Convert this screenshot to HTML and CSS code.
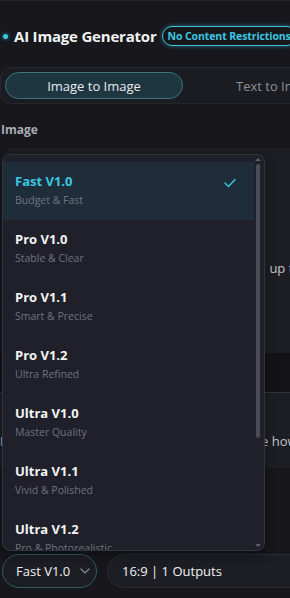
FILE: index.html
```html
<!DOCTYPE html>
<html lang="en">
<head>
    <meta charset="UTF-8">
    <meta name="viewport" content="width=device-width, initial-scale=1.0">
    <title>AI Image Generator</title>
    <link rel="stylesheet" href="styles.css">
</head>
<body>
    <div class="page">
        <header class="title-row">
            <span class="dot"></span>
            <h1>AI Image Generator</h1>
            <span class="badge">No Content Restrictions</span>
        </header>

        <nav class="tabs">
            <button class="tab active">Image to Image</button>
            <button class="tab">Text to Image</button>
        </nav>

        <div class="label">Image</div>

        <section class="upload-card">
            <p class="hint"><span class="hint-lead">Supports JPG, PNG, WEBP</span> up to 10MB</p>
        </section>
        <div class="divider-band"></div>
        <section class="prompt-card">
            <p class="hint"><span class="hint-lead">Describe the scen</span>e how you want it</p>
        </section>

        <footer class="bottom-bar">
            <button class="pill model-pill">Fast V1.0
                <svg width="10" height="6" viewBox="0 0 10 6"><path d="M1 1l4 4 4-4" fill="none" stroke="#8a8d96" stroke-width="1.2" stroke-linecap="round"/></svg>
            </button>
            <button class="pill ratio-pill">16:9 | 1 Outputs</button>
        </footer>

        <!-- open model menu -->
        <div class="menu">
            <ul class="menu-list">
                <li class="menu-item selected">
                    <div class="item-title">Fast V1.0</div>
                    <div class="item-desc">Budget &amp; Fast</div>
                    <svg class="check" width="12" height="10" viewBox="0 0 12 10"><path d="M1 5l3.5 3.5L11 1.5" fill="none" stroke="#3cc7e0" stroke-width="1.4" stroke-linecap="round" stroke-linejoin="round"/></svg>
                </li>
                <li class="menu-item">
                    <div class="item-title">Pro V1.0</div>
                    <div class="item-desc">Stable &amp; Clear</div>
                </li>
                <li class="menu-item">
                    <div class="item-title">Pro V1.1</div>
                    <div class="item-desc">Smart &amp; Precise</div>
                </li>
                <li class="menu-item">
                    <div class="item-title">Pro V1.2</div>
                    <div class="item-desc">Ultra Refined</div>
                </li>
                <li class="menu-item">
                    <div class="item-title">Ultra V1.0</div>
                    <div class="item-desc">Master Quality</div>
                </li>
                <li class="menu-item">
                    <div class="item-title">Ultra V1.1</div>
                    <div class="item-desc">Vivid &amp; Polished</div>
                </li>
                <li class="menu-item">
                    <div class="item-title">Ultra V1.2</div>
                    <div class="item-desc">Pro &amp; Photorealistic</div>
                </li>
            </ul>
            <div class="scrollbar">
                <span class="arrow up"></span>
                <span class="thumb"></span>
                <span class="arrow down"></span>
            </div>
        </div>
    </div>
</body>
</html>
```

FILE: styles.css
```css
:root {
    --bg: #17171c;
    --card: #1d1e24;
    --menu: #1f2029;
    --menu-border: #32333d;
    --selected: #1f2d3a;
    --accent: #3cc7e0;
    --text: #f1f2f4;
    --muted: #707380;
}

* {
    margin: 0;
    padding: 0;
    box-sizing: border-box;
}

body {
    font-family: 'Open Sans', 'Noto Sans', Arial, sans-serif;
    background-color: var(--bg);
    color: var(--text);
    width: 290px;
    height: 598px;
    overflow: hidden;
}

.page {
    position: relative;
    height: 598px;
    border-top: 1px solid #24252b;
}

.title-row {
    display: flex;
    align-items: center;
    gap: 5px;
    padding: 22px 0 0 3px;
    height: 48px;
    white-space: nowrap;
}

.dot {
    flex-shrink: 0;
    width: 5px;
    height: 5px;
    border-radius: 50%;
    background: var(--accent);
    box-shadow: 0 0 4px rgba(60, 199, 224, 0.7);
    margin-right: 1px;
}

.title-row h1 {
    flex-shrink: 0;
    font-size: 15px;
    font-weight: 700;
    letter-spacing: -0.2px;
}

.badge {
    flex-shrink: 0;
    padding: 2px 5px;
    border: 1px solid var(--accent);
    border-radius: 10px;
    color: var(--accent);
    font-size: 10.5px;
    font-weight: 700;
    letter-spacing: -0.1px;
    box-shadow: 0 0 5px rgba(60, 199, 224, 0.45);
}

.tabs {
    display: flex;
    margin-top: 18px;
    height: 37px;
    padding: 4px;
    background: #1b1c21;
    border: 1px solid #26272d;
    border-radius: 12px 0 0 12px;
    border-right: none;
    gap: 53px;
}

.tab {
    flex-shrink: 0;
    font-family: inherit;
    font-size: 13px;
    border: none;
    background: none;
    color: #8d9099;
    white-space: nowrap;
    border-radius: 14px;
}

.tab.active {
    width: 178px;
    color: #e8eaed;
    background: #1e3640;
    border: 1px solid #3d7480;
}

.label {
    margin-top: 17px;
    padding-left: 1px;
    font-size: 12px;
    font-weight: 700;
    color: #a9acb3;
}

.upload-card {
    margin: 10px 0 0 2px;
    height: 205px;
    background: var(--card);
    border-radius: 10px 0 0 0;
    padding-top: 111px;
}

.hint {
    white-space: nowrap;
    font-size: 13px;
    color: #c3c5cb;
}

.hint-lead {
    display: inline-block;
    width: 264px;
    overflow: hidden;
    vertical-align: bottom;
}

.divider-band {
    height: 40px;
    background: #131317;
    border-bottom: 1px solid #34353c;
}

.prompt-card {
    height: 75px;
    background: var(--card);
    padding-top: 39px;
}

.prompt-card .hint-lead {
    width: 261px;
}

.bottom-bar {
    display: flex;
    gap: 10px;
    padding: 0 0 0 2px;
    margin-top: 86px;
}

.pill {
    display: flex;
    align-items: center;
    height: 34px;
    font-family: inherit;
    font-size: 13px;
    color: var(--text);
    background: #1c1e24;
    border: 1px solid #2a2b31;
    border-radius: 17px;
    white-space: nowrap;
}

.model-pill {
    width: 95px;
    gap: 10px;
    padding-left: 13px;
    border-color: #2f5d66;
}

.ratio-pill {
    flex: 1;
    padding-left: 14px;
    border-radius: 17px 0 0 17px;
    border-right: none;
}

/* dropdown opened over the form */
.menu {
    position: absolute;
    left: 2px;
    top: 153px;
    width: 263px;
    height: 397px;
    background: var(--menu);
    border: 1px solid var(--menu-border);
    border-radius: 8px;
    overflow: hidden;
    display: flex;
    box-shadow: 0 4px 12px rgba(0, 0, 0, 0.35);
}

.menu-list {
    list-style: none;
    flex: 1;
    padding-top: 7px;
}

.menu-item {
    position: relative;
    height: 58px;
    padding: 10px 0 0 12px;
}

.menu-item.selected {
    background: var(--selected);
}

.item-title {
    font-size: 13px;
    font-weight: 700;
    color: #f3f4f6;
    line-height: 18px;
}

.selected .item-title {
    color: var(--accent);
}

.item-desc {
    margin-top: 3px;
    font-size: 10.5px;
    color: var(--muted);
    line-height: 14px;
}

.check {
    position: absolute;
    right: 18px;
    top: 16px;
}

.scrollbar {
    width: 8px;
    display: flex;
    flex-direction: column;
    align-items: center;
    padding: 3px 0;
    margin-right: 2px;
}

.thumb {
    width: 4px;
    height: 274px;
    margin-top: 3px;
    border-radius: 2px;
    background: #4a4c57;
}

.arrow {
    width: 0;
    height: 0;
    border-left: 3px solid transparent;
    border-right: 3px solid transparent;
}

.arrow.up {
    border-bottom: 3px solid #5a5c66;
}

.arrow.down {
    margin-top: auto;
    border-top: 3px solid #5a5c66;
}
```
